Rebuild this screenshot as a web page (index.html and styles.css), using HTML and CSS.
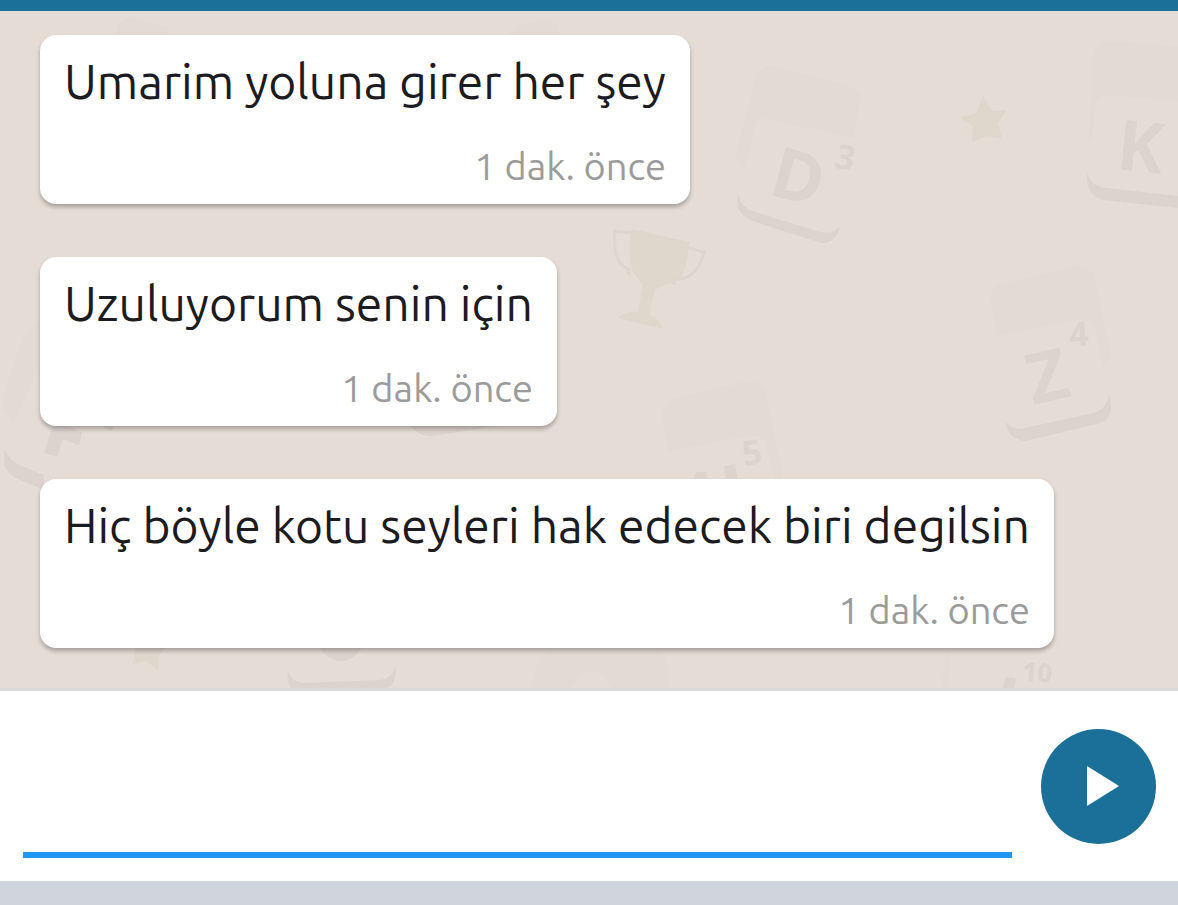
FILE: index.html
```html
<!DOCTYPE html>
<html lang="tr">
<head>
    <meta charset="UTF-8">
    <meta name="viewport" content="width=device-width, initial-scale=1.0">
    <title>Sohbet</title>
    <link rel="stylesheet" href="styles.css">
</head>
<body>
    <header class="topbar"></header>

    <main class="chat">
        <svg class="wallpaper" viewBox="0 11 1178 677" preserveAspectRatio="xMinYMin slice" aria-hidden="true">
            <!-- tile D -->
            <path class="shade" d="M770 66 L848 86 Q860 90 860 100 L854 138 L767 119 Q756 117 754 130 L745 168 L736 162 Q737 145 742 130 L755 80 Q759 66 770 66 Z"/>
            <path class="ink" d="M738 195 Q741 208 755 212 L820 232 Q832 235 840 227 Q835 244 821 243 L752 221 Q734 213 738 195 Z"/>
            <text class="letter" transform="translate(767 194) rotate(15)">D</text>
            <text class="points" transform="translate(833 167) rotate(13)">3</text>

            <!-- tile K -->
            <path class="shade" d="M1108 41 L1178 46 V101 L1108 95 Q1096 95 1095 106 L1092 140 H1089 L1093 55 Q1095 41 1108 41 Z"/>
            <path class="ink" d="M1087 173 Q1092 187 1106 188 L1178 196 V208 L1103 200 Q1086 196 1087 173 Z"/>
            <text class="letter" transform="translate(1115 169) rotate(6)">K</text>

            <!-- tile Z -->
            <path class="shade" d="M1000 284 L1075 266 Q1090 265 1095 278 L1111 355 L1103 366 L1094 325 Q1090 318 1080 319 L997 336 L990 298 Q991 287 1000 284 Z"/>
            <path class="ink" d="M1005 421 Q1011 431 1025 428 L1093 413 Q1107 409 1109 395 Q1116 420 1097 424 L1025 441 Q1008 440 1005 421 Z"/>
            <text class="letter" transform="translate(1033 405) rotate(-13)">Z</text>
            <text class="points" transform="translate(1070 347) rotate(-5)">4</text>

            <!-- tile with 5 points -->
            <path class="shade" d="M674 399 L745 382 Q762 380 766 393 L782 470 V479 H776 L766 444 Q760 434 748 436 L668 451 L662 415 Q664 401 674 399 Z"/>
            <path class="ink" d="M694 479 L696 472 H706 L707 479 Z M724 466 L735 464 L738 479 H726 Z"/>
            <text class="points" transform="translate(744 466) rotate(-9)">5</text>

            <!-- tile A -->
            <path class="shade" d="M40 323 V365 L13 424 L2 405 Q3 395 20 345 Q26 328 40 323 Z"/>
            <path class="ink" d="M5 450 Q10 462 22 466 L44 475 V490 L20 480 Q0 472 5 450 Z"/>
            <path class="ink" d="M53 425 H67 L82 433 L79 445 L63 439 L57 457 L44 453 Z M104 425 H114 L112 431 L104 428 Z"/>

            <!-- tiles behind the bubbles -->
            <path class="shade" d="M115 35 Q119 16 133 18 L168 28 V35 Z M505 35 Q530 20 545 19 Q556 20 560 35 Z"/>
            <path class="ink" d="M410 425 H505 L432 436 Q418 437 410 425 Z"/>
            <path class="ink" d="M319 645 H363 Q355 661 341 661 Q325 660 319 645 Z"/>
            <path class="ink" d="M288 671 Q292 682 304 683 L380 680 Q391 679 396 667 Q396 686 386 688 H291 Q286 682 288 671 Z"/>
            <path class="shade" d="M531 688 Q540 646 556 646 H653 Q669 652 669 688 H612 Q592 654 571 688 Z"/>
            <path class="shade" d="M946 650 H951 L948 688 H942 Z"/>
            <path class="ink" d="M1005 677 L1016 678 L1014 688 H1003 Z"/>
            <text class="points small" transform="translate(1022 681) rotate(3)">10</text>

            <!-- stars -->
            <path class="gold" d="M983 96 L992 111 L1007 110 L998 123 L1002 139 L986 136 L972 142 L973 126 L960 118 L976 113 Z"/>
            <path class="gold" d="M136 645 H168 L159 655 L158 671 L147 661 L133 664 Z"/>

            <!-- trophy -->
            <path class="gold" d="M632 229 L689 242 Q688 274 674 283 Q664 284 655 290 L651 307 L650 315 Q658 317 663 329 L618 318 Q628 310 638 312 L643 285 L635 274 Q628 267 630 238 Z"/>
            <path class="gold-line" d="M631 233 L615 231 Q612 264 630 270 M688 248 L704 252 Q697 281 673 279 M627 271 L630 275 M673 280 L674 285"/>
        </svg>

        <ul class="messages">
            <li class="bubble">
                <p class="message">Umarim yoluna girer her şey</p>
                <time class="time">1 dak. önce</time>
            </li>
            <li class="bubble">
                <p class="message">Uzuluyorum senin için</p>
                <time class="time">1 dak. önce</time>
            </li>
            <li class="bubble">
                <p class="message">Hiç böyle kotu seyleri hak edecek biri degilsin</p>
                <time class="time">1 dak. önce</time>
            </li>
        </ul>
    </main>

    <form class="composer">
        <input class="composer-input" type="text" aria-label="Mesaj" autocomplete="off">
        <button class="send" type="button" aria-label="Gönder">
            <svg class="send-icon" viewBox="0 0 32 40" aria-hidden="true">
                <path d="M0 0 L32 20 L0 40 Z"/>
            </svg>
        </button>
    </form>
</body>
</html>
```
FILE: styles.css
```css
* {
    margin: 0;
    padding: 0;
    box-sizing: border-box;
}

body {
    font-family: Ubuntu, "Noto Sans", sans-serif;
    background: #d0d4dc;
    min-height: 100vh;
}

.topbar {
    height: 11px;
    background: #1a7098;
}

.chat {
    position: relative;
    overflow: hidden;
    padding: 24px 40px 40px;
    background: #e5dcd6;
    border-bottom: 3px solid #dadada;
}

.wallpaper {
    position: absolute;
    top: 0;
    left: 0;
    width: 100%;
    height: 100%;
    font-family: "Open Sans", sans-serif;
    font-weight: 700;
}

.shade {
    fill: #e3dad4;
}

.ink,
.letter,
.points {
    fill: #dcd3ce;
}

.gold {
    fill: #dfd6cc;
}

.gold-line {
    fill: none;
    stroke: #ded5cf;
    stroke-width: 3;
}

.letter {
    font-size: 70px;
}

.points {
    font-size: 34px;
}

.points.small {
    font-size: 26px;
}

.messages {
    position: relative;
    display: flex;
    flex-direction: column;
    align-items: flex-start;
    gap: 53px;
    list-style: none;
}

.bubble {
    display: flex;
    flex-direction: column;
    gap: 29px;
    padding: 16px 24px 12px;
    background: white;
    border-radius: 16px;
    box-shadow: 0 3px 4px rgba(0, 0, 0, 0.28);
}

.message {
    font-size: 48px;
    line-height: 60px;
    color: #1c1b1f;
}

.time {
    align-self: flex-end;
    font-size: 38px;
    line-height: 52px;
    color: #9b9b9b;
}

.composer {
    display: flex;
    align-items: center;
    gap: 29px;
    height: 190px;
    padding: 23px 22px 23px 23px;
    background: white;
}

.composer-input {
    flex: 1;
    align-self: stretch;
    min-width: 0;
    border: none;
    border-bottom: 6px solid #2196f3;
    outline: none;
    background: none;
    font-family: inherit;
    font-size: 48px;
    color: #1c1b1f;
}

.send {
    display: flex;
    align-items: center;
    justify-content: center;
    flex: none;
    width: 115px;
    height: 115px;
    padding-left: 8px;
    border: none;
    border-radius: 50%;
    background: #1a7098;
    cursor: pointer;
}

.send-icon {
    width: 32px;
    height: 40px;
    fill: white;
}
```
